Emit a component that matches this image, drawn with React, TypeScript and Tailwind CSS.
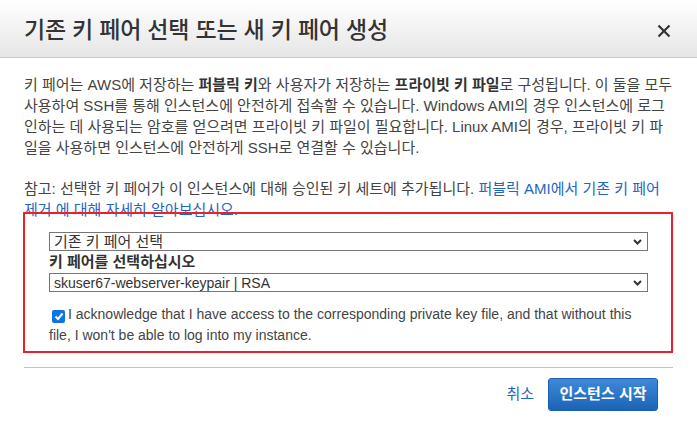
import React from 'react'

const font = 'font-["Liberation_Sans","Noto_Sans_CJK_KR",sans-serif]'

function Chevron() {
  return (
    <svg width="9" height="6" viewBox="0 0 9 6" className="shrink-0">
      <polyline points="1,1 4.5,4.5 8,1" fill="none" stroke="#333" strokeWidth="2" />
    </svg>
  )
}

function SelectBox({ value, small }: { value: string; small?: boolean }) {
  return (
    <div className="flex h-[19px] items-center justify-between border border-[#767676] bg-white pl-[4px] pr-[5px]">
      <span className={small ? 'text-[14px] leading-none text-[#333]' : 'text-[15px] leading-none text-[#333]'}>{value}</span>
      <Chevron />
    </div>
  )
}

export default function App() {
  return (
    <div className={`${font} h-[430px] w-[697px] bg-white text-[15px] text-[#444]`}>
      {/* Header */}
      <div className="flex h-[58px] items-center justify-between border-b border-[#c9c9c9] bg-gradient-to-b from-[#ffffff] to-[#e6e6e6] pl-[24px] pr-[26px] pt-[4px]">
        <h1 className="text-[23px] font-medium tracking-[-0.2px] text-[#333]">기존 키 페어 선택 또는 새 키 페어 생성</h1>
        <svg width="14" height="14" viewBox="0 0 14 14">
          <line x1="1.5" y1="1.5" x2="12.5" y2="12.5" stroke="#333" strokeWidth="2.2" />
          <line x1="12.5" y1="1.5" x2="1.5" y2="12.5" stroke="#333" strokeWidth="2.2" />
        </svg>
      </div>

      {/* Body */}
      <div className="relative px-[24px] pt-[16px]">
        <div className="leading-[21px] whitespace-nowrap">
          <div>
            키 페어는 AWS에 저장하는 <b className="font-bold text-[#333]">퍼블릭 키</b>와 사용자가 저장하는{' '}
            <b className="font-bold text-[#333]">프라이빗 키 파일</b>로 구성됩니다. 이 둘을 모두
          </div>
          <div>사용하여 SSH를 통해 인스턴스에 안전하게 접속할 수 있습니다. Windows AMI의 경우 인스턴스에 로그</div>
          <div>인하는 데 사용되는 암호를 얻으려면 프라이빗 키 파일이 필요합니다. Linux AMI의 경우, 프라이빗 키 파</div>
          <div>일을 사용하면 인스턴스에 안전하게 SSH로 연결할 수 있습니다.</div>
        </div>
        <div className="mt-[20px] leading-[21px] whitespace-nowrap">
          <div>
            참고: 선택한 키 페어가 이 인스턴스에 대해 승인된 키 세트에 추가됩니다.{' '}
            <span className="text-[#1f66c1]">퍼블릭 AMI에서 기존 키 페어</span>
          </div>
          <div className="text-[#1f66c1]">제거 에 대해 자세히 알아보십시오.</div>
        </div>

        {/* Key pair form */}
        <div className="mt-[12px] pl-[25px] pr-[25px]">
          <SelectBox value="기존 키 페어 선택" />
          <div className="h-[22px] leading-[22px] font-bold text-[#333]">키 페어를 선택하십시오</div>
          <SelectBox value="skuser67-webserver-keypair | RSA" small />
          <p className="mt-[12px] text-[14px] leading-[21px]">
            <span className="relative top-[2px] ml-[3px] mr-[3px] inline-flex h-[13px] w-[13px] items-center justify-center rounded-[2px] bg-[#0b75e8]">
              <svg width="10" height="9" viewBox="0 0 10 9">
                <polyline points="1.5,4.5 4,7 8.5,1.5" fill="none" stroke="#fff" strokeWidth="2" />
              </svg>
            </span>
            I acknowledge that I have access to the corresponding private key file, and that without this file, I won't be
            able to log into my instance.
          </p>
        </div>

        {/* annotation frame */}
        <div className="pointer-events-none absolute left-[23px] top-[154px] h-[141px] w-[650px] border-2 border-[#e8212b]" />

        {/* Footer */}
        <div className="mt-[21px] flex items-center justify-end gap-[14px] border-t border-[#c4c4c4] pr-[15px] pt-[10px]">
          <span className="text-[#1f66c1]">취소</span>
          <button className="flex h-[33px] w-[110px] items-center justify-center rounded-[3px] border border-[#1b5fae] bg-gradient-to-b from-[#3d8ad9] to-[#1b63b6] text-[15px] font-bold text-white">
            인스턴스 시작
          </button>
        </div>
      </div>
    </div>
  )
}
